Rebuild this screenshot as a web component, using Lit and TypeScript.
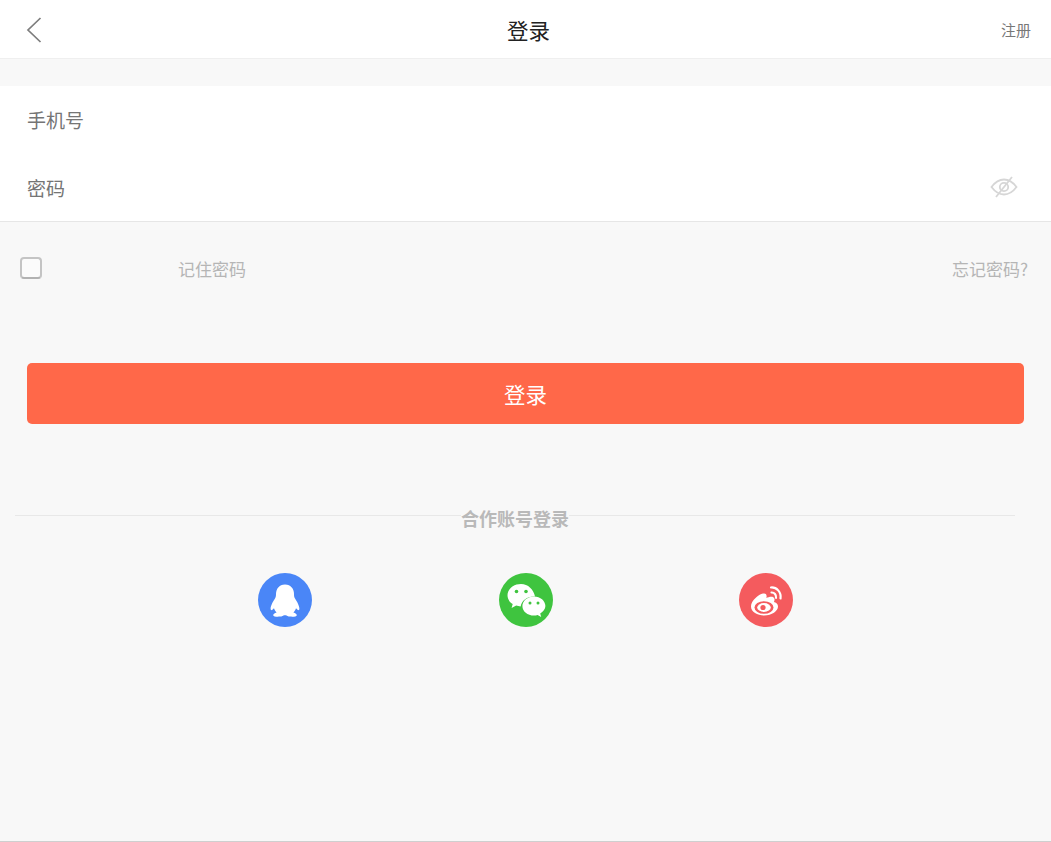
import { LitElement, html, css } from "lit";
import { customElement } from "lit/decorators.js";

@customElement("app-root")
export class AppRoot extends LitElement {
  static styles = css`
    :host {
      display: block;
      width: 1051px;
      height: 842px;
      background: #f8f8f8;
      font-family: "Noto Sans CJK SC", "Liberation Sans", sans-serif;
      box-sizing: border-box;
      border-bottom: 1px solid #cfcfcf;
      overflow: hidden;
    }
    .header {
      height: 59px;
      box-sizing: border-box;
      background: #fff;
      border-bottom: 1px solid #efefef;
      display: grid;
      grid-template-columns: 1fr auto 1fr;
      align-items: center;
      padding: 0 20px 0 26px;
    }
    .back { display: block; width: 16px; height: 26px; }
    .title { font-size: 21.5px; color: #222; line-height: 59px; }
    .reg { justify-self: end; font-size: 15px; color: #777; }
    .form {
      margin-top: 27px;
      background: #fff;
      border-bottom: 1px solid #e6e6e6;
      padding: 0 33px 0 27px;
    }
    .row {
      height: 67.5px;
      display: flex;
      align-items: center;
      justify-content: space-between;
      font-size: 19px;
      color: #757575;
    }
    .eye { display: block; width: 28px; height: 22px; }
    .opts {
      height: 92px;
      display: flex;
      align-items: center;
      padding: 0 23px 0 20px;
      font-size: 17px;
      color: #b5b5b5;
    }
    .check {
      width: 22px;
      height: 22px;
      box-sizing: border-box;
      border: 2px solid #c4c4c4;
      border-bottom-color: #b2b2b2;
      border-radius: 4px;
      background: #fbfbfb;
    }
    .rem { margin-left: 136px; flex: 1; }
    .btn {
      margin: 49px 27px 0;
      height: 61px;
      border-radius: 5px;
      background: #ff6849;
      color: #fff;
      font-size: 21.5px;
      display: flex;
      align-items: center;
      justify-content: center;
    }
    .divider {
      margin: 80px 36px 0 15px;
      height: 28px;
      display: flex;
      align-items: center;
      justify-content: center;
      position: relative;
    }
    .line { flex: 1; height: 1px; background: #e8e8e8; transform: translateY(-3px); }
    .divider span {
      font-size: 18px;
      font-weight: 700;
      color: #b9b9b9;
      white-space: nowrap;
    }
    .social {
      margin-top: 41px;
      display: flex;
      justify-content: center;
      gap: 186.5px;
    }
    .ic { display: block; width: 54px; height: 54px; }
  `;

  render() {
    return html`
      <div class="header">
        <svg class="back" viewBox="0 0 16 26" fill="none" stroke="#7d7d7d" stroke-width="1.7">
          <path d="M14.5 1 L2 13 L14.5 25" />
        </svg>
        <div class="title">登录</div>
        <div class="reg">注册</div>
      </div>
      <div class="form">
        <div class="row"><span>手机号</span></div>
        <div class="row">
          <span>密码</span>
          <svg class="eye" viewBox="0 0 28 22" fill="none" stroke="#d6d6d6" stroke-width="1.8">
            <path d="M1.5 11 C6 5 10 3.5 14 3.5 S22 5 26.5 11 C22 17 18 18.5 14 18.5 S6 17 1.5 11 Z" />
            <circle cx="14" cy="11" r="4.2" />
            <path d="M22 1 L6 21" />
          </svg>
        </div>
      </div>
      <div class="opts">
        <div class="check"></div>
        <span class="rem">记住密码</span>
        <span>忘记密码?</span>
      </div>
      <div class="btn">登录</div>
      <div class="divider">
        <div class="line"></div>
        <span>合作账号登录</span>
        <div class="line"></div>
      </div>
      <div class="social">
        <svg class="ic" viewBox="0 0 54 54">
          <circle cx="27" cy="27" r="27" fill="#4a86f7" />
          <path fill="#fff" d="M27 11.5 C21 11.5 18 16 18 21 C18 23 17.8 24 17 25.5 C15 28.5 12.5 33 12.6 36 C12.7 37.8 14 37.5 16 35.2 C16.6 37 17.3 38.2 18.6 39.4 C16.6 40 15 41 15.2 42.2 C15.5 43.6 19 44 22 43.6 C24 43.3 25.2 42.8 25.8 42.2 L28.2 42.2 C28.8 42.8 30 43.3 32 43.6 C35 44 38.5 43.6 38.8 42.2 C39 41 37.4 40 35.4 39.4 C36.7 38.2 37.4 37 38 35.2 C40 37.5 41.3 37.8 41.4 36 C41.5 33 39 28.5 37 25.5 C36.2 24 36 23 36 21 C36 16 33 11.5 27 11.5 Z" />
        </svg>
        <svg class="ic" viewBox="0 0 54 54">
          <circle cx="27" cy="27" r="27" fill="#3fc43f" />
          <path fill="#fff" d="M22 11 C14.5 11 8.5 16 8.5 22.3 C8.5 26 10.5 29 13.7 31 L12.6 35 L17.2 32.6 C18.6 33 20.2 33.3 21.6 33.4 C23 27 29 23 36 23.6 C34.8 16.5 29 11 22 11 Z" />
          <path fill="#fff" d="M35 23.4 C28.5 23.4 23.4 27.8 23.4 33 C23.4 38.4 28.5 42.6 35 42.6 C36.2 42.6 37.4 42.4 38.6 42 L42.2 44 L41.2 40.6 C44 38.8 46.4 36 46.4 33 C46.4 27.8 41.4 23.4 35 23.4 Z" />
          <circle cx="17.5" cy="18.5" r="1.8" fill="#3fc43f" />
          <circle cx="27" cy="18.5" r="1.8" fill="#3fc43f" />
          <circle cx="31" cy="30" r="1.5" fill="#3fc43f" />
          <circle cx="39" cy="30" r="1.5" fill="#3fc43f" />
        </svg>
        <svg class="ic" viewBox="0 0 54 54">
          <circle cx="27" cy="27" r="27" fill="#f45b5e" />
          <path fill="#fff" d="M24 20.5 C19.5 21.5 12 27.5 12 33.5 C12 39 18.5 42.5 25 42.5 C33 42.5 39 38 39 33.5 C39 30.5 36.5 29.5 35 29 C35.8 27 35.8 25 34.3 24.2 C32.3 23.2 29 24.4 27.4 25 C28 22.5 27.6 19.8 24 20.5 Z" />
          <ellipse cx="25" cy="34.5" rx="9.5" ry="6.3" fill="#f45b5e" />
          <ellipse cx="25" cy="34.5" rx="6.8" ry="4.4" fill="#fff" />
          <circle cx="24" cy="34.5" r="2.6" fill="#f45b5e" />
          <g fill="none" stroke="#fff" stroke-width="2.2" stroke-linecap="round">
            <path d="M32 14.5 C37.5 14 42.5 19 41.5 25.5" />
            <path d="M32.5 19.5 C35.3 19.3 37.5 21.8 37 24.8" />
          </g>
        </svg>
      </div>
    `;
  }
}
